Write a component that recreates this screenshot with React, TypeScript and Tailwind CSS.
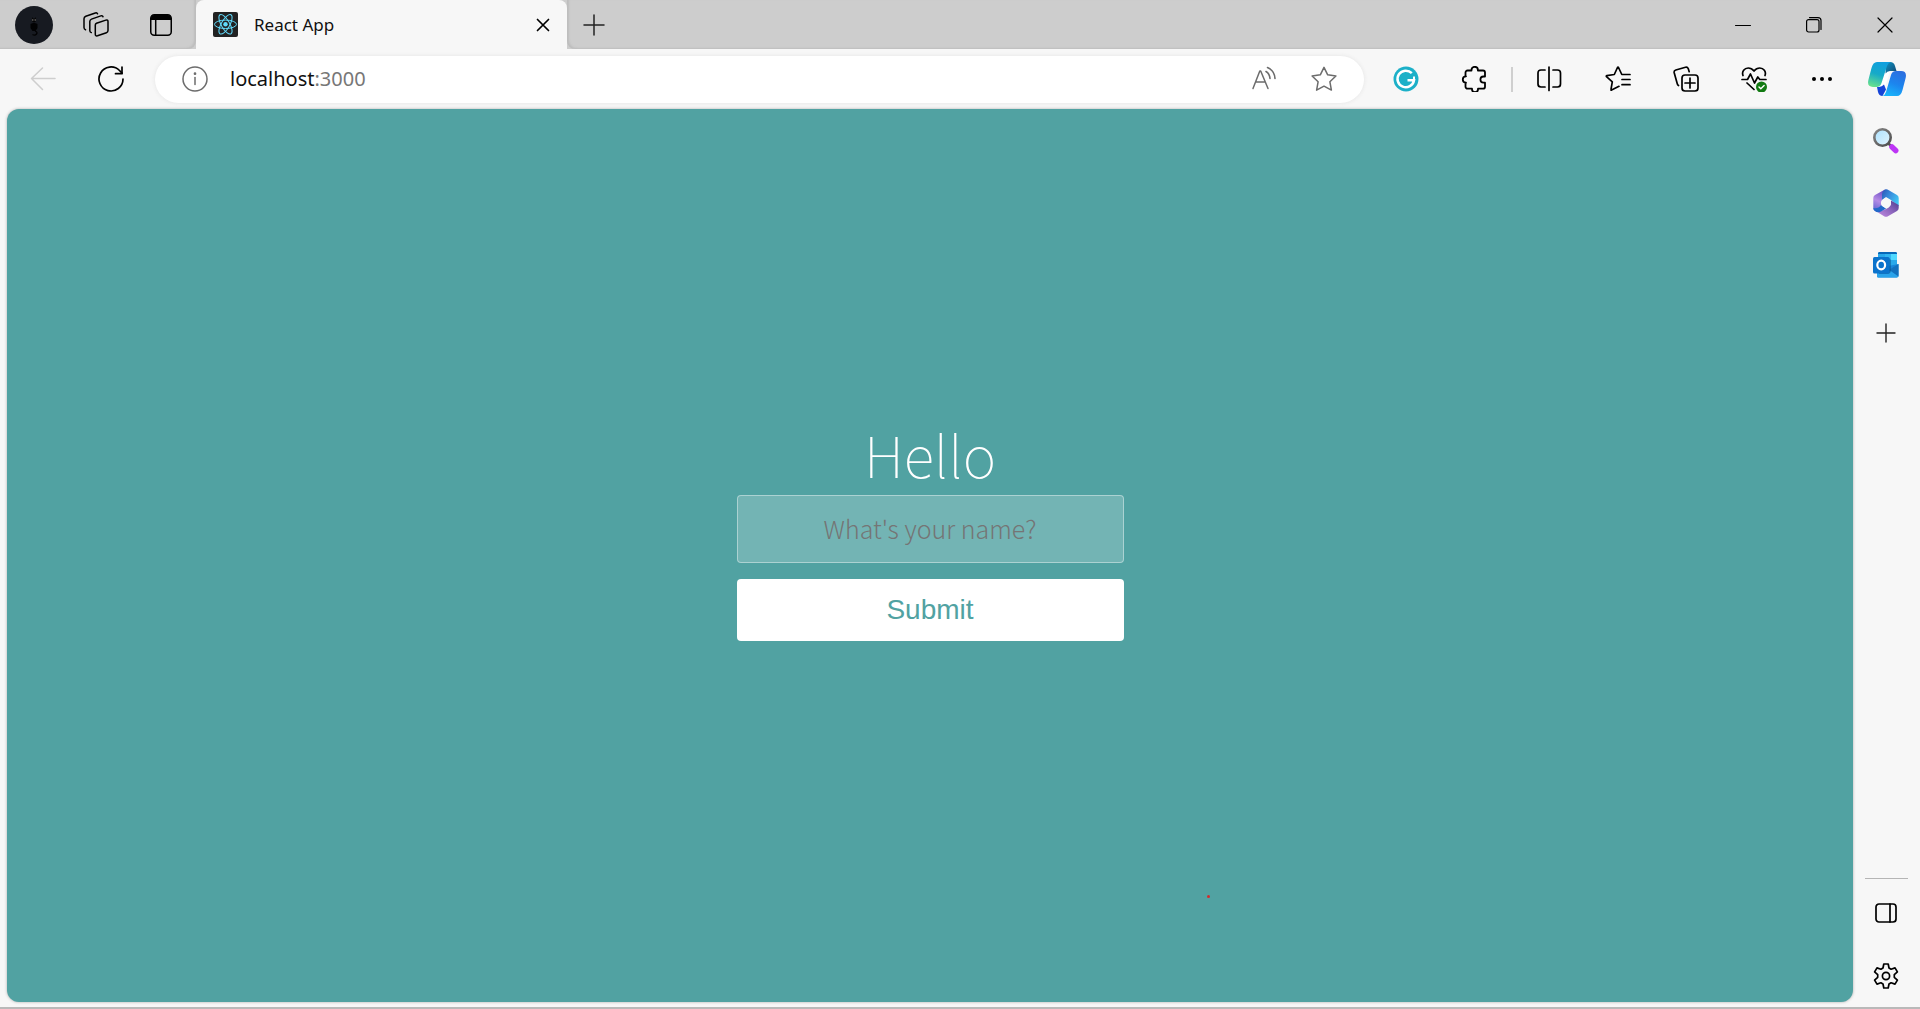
import type { ReactNode } from "react";

type IconButtonProps = { label: string; className: string; children: ReactNode };

function IconButton({ label, className, children }: IconButtonProps) {
  return (
    <button type="button" aria-label={label} className={`flex shrink-0 items-center justify-center ${className}`}>
      {children}
    </button>
  );
}

type LineIconProps = { size?: number; width?: number; children: ReactNode; className?: string };

function LineIcon({ size = 26, width = 1.5, children, className = "" }: LineIconProps) {
  return (
    <svg
      width={size}
      height={size}
      viewBox={`0 0 ${size} ${size}`}
      fill="none"
      stroke="currentColor"
      strokeWidth={width}
      strokeLinecap="round"
      strokeLinejoin="round"
      className={className}
      aria-hidden="true"
    >
      {children}
    </svg>
  );
}

function Avatar() {
  return (
    <svg width="38" height="38" viewBox="0 0 38 38" aria-hidden="true">
      <circle cx="19" cy="19" r="19" fill="#171a21" />
      <path d="M17 11v3.500q0 2 2 2t2-2V11l-1.200 1.500h-1.600z" fill="#060607" />
      <path d="M15.500 18q3.500-2 7 0v4l-2 3h-3l-2-3z" fill="#020203" />
      <path d="M20 25q3 1 1.500 3t-4 .5" fill="none" stroke="#020203" strokeWidth="1.300" />
      <circle cx="17.800" cy="14" r=".7" fill="#8a8580" />
      <circle cx="20.200" cy="14" r=".7" fill="#8a8580" />
    </svg>
  );
}

function WorkspacesIcon() {
  return (
    <LineIcon>
      <path d="M13.500 11.300 L22.800 8.100 q2.200-.6 2.200 1.600 V18.500 q0 1.700-1.600 2.200 L14.500 23.800 q-2.200.6-2.200-1.500 V13 q0-1.200 1.200-1.700z" />
      <path d="M20 4.800q-.4-1.500-2.200-.9L8.500 7.100q-1.700.6-1.700 2.400v9q0 1.600 1.500 2.100" />
      <path d="M14.500 1.800q-.5-1.400-2.200-.8L2.800 4.300Q1 5 1 6.800v8.800q0 1.600 1.500 2.100" />
    </LineIcon>
  );
}

function VerticalTabsIcon() {
  return (
    <svg width="22" height="22" viewBox="0 0 22 22" fill="none" stroke="#000" strokeWidth="1.500" aria-hidden="true">
      <rect x=".75" y=".75" width="20.500" height="20.500" rx="3.500" />
      <path d="M1 6V4q0-3 3-3h14q3 0 3 3v2z" fill="#000" stroke="none" />
      <path d="M5.700 6v15" />
    </svg>
  );
}

function ReactLogo() {
  return (
    <svg width="25" height="25" viewBox="0 0 25 25" aria-hidden="true" className="shrink-0">
      <rect width="25" height="25" rx="2" fill="#222" />
      <g fill="none" stroke="#61dafb" strokeWidth="1">
        <ellipse cx="12.500" cy="12.300" rx="11" ry="4.200" />
        <ellipse cx="12.500" cy="12.300" rx="11" ry="4.200" transform="rotate(60 12.500 12.300)" />
        <ellipse cx="12.500" cy="12.300" rx="11" ry="4.200" transform="rotate(120 12.500 12.300)" />
      </g>
      <circle cx="12.500" cy="12.300" r="2.200" fill="#61dafb" />
    </svg>
  );
}

function GrammarlyIcon() {
  return (
    <svg width="26" height="26" viewBox="0 0 26 26" fill="none" aria-hidden="true">
      <circle cx="13" cy="13" r="12.500" fill="#1cb0c8" />
      <path d="M18.800 7.200A8.300 8.300 0 1 0 21 14.300H14.500" stroke="#fff" strokeWidth="2.500" />
      <path d="M21 10.500v4" stroke="#fff" strokeWidth="2" />
    </svg>
  );
}

function CopilotIcon() {
  return (
    <svg width="38" height="34" viewBox="0 0 38 34" aria-hidden="true">
      <defs>
        <linearGradient id="cpA" x1=".6" y1="0" x2=".3" y2="1">
          <stop offset="0" stopColor="#0f9fdf" />
          <stop offset=".5" stopColor="#16aac8" />
          <stop offset="1" stopColor="#66e08e" />
        </linearGradient>
        <linearGradient id="cpB" x1=".7" y1="0" x2=".3" y2="1">
          <stop offset="0" stopColor="#2c6fe0" />
          <stop offset=".5" stopColor="#1c85ee" />
          <stop offset="1" stopColor="#19b4fb" />
        </linearGradient>
        <linearGradient id="cpC" x1="0" y1="0" x2="1" y2="1">
          <stop offset="0" stopColor="#0c93c5" />
          <stop offset="1" stopColor="#14466f" />
        </linearGradient>
      </defs>
      <path d="M22 9l-5 16h-7q2.500-1 3.500-4l3-9q.8-2.500 3-3z" fill="#fff" />
      <path d="M18 0h4q4 0 5 4l1.500 5H22q-3 0-4.500 2.500z" fill="url(#cpC)" />
      <path d="M9 25h2q3-.3 5-2.500l2 5-3.500 6.500q-3.500 0-4.500-4z" fill="#1544d8" />
      <path d="M9 0h13.500q-2.500 1-3.500 4l-5.500 17q-1.200 4-5 4H5q-6.500 0-4.500-7.500L3.500 6Q5 0 9 0z" fill="url(#cpA)" />
      <path d="M29 34H14.500q2.500-1 3.500-4l5-17q1.200-4 5-4h5q6.500 0 4.500 7.500L34.500 28Q33 34 29 34z" fill="url(#cpB)" />
    </svg>
  );
}

function SearchIcon() {
  return (
    <svg width="26" height="26" viewBox="0 0 26 26" aria-hidden="true">
      <defs>
        <linearGradient id="lens" x1="0" y1="0" x2="1" y2="1">
          <stop offset="0" stopColor="#ace2ff" />
          <stop offset="1" stopColor="#e2f3fc" />
        </linearGradient>
        <linearGradient id="rim" x1="0" y1="0" x2="1" y2="1">
          <stop offset="0" stopColor="#858585" />
          <stop offset="1" stopColor="#4d4d4d" />
        </linearGradient>
      </defs>
      <path d="M15.500 15.500l4 4" stroke="#555" strokeWidth="2.500" />
      <path d="M19 19l3.700 3.500" stroke="#bd35f5" strokeWidth="5.500" strokeLinecap="round" />
      <circle cx="9.500" cy="9.500" r="8.200" fill="url(#lens)" stroke="url(#rim)" strokeWidth="2.600" />
    </svg>
  );
}

function Microsoft365Icon() {
  return (
    <svg width="26" height="28" viewBox="0 0 26 28" aria-hidden="true">
      <defs>
        <linearGradient id="msA" x1=".5" y1="0" x2=".2" y2="1">
          <stop offset="0" stopColor="#6d4fc4" />
          <stop offset=".5" stopColor="#b58be5" />
          <stop offset="1" stopColor="#5a62d0" />
        </linearGradient>
        <linearGradient id="msB" x1="0" y1="0" x2="1" y2=".6">
          <stop offset="0" stopColor="#2b54b5" />
          <stop offset=".5" stopColor="#398ddd" />
          <stop offset="1" stopColor="#40c4f2" />
        </linearGradient>
        <linearGradient id="msC" x1="1" y1="0" x2="0" y2="1">
          <stop offset="0" stopColor="#4c3b8e" />
          <stop offset=".5" stopColor="#8d66bd" />
          <stop offset="1" stopColor="#c18be0" />
        </linearGradient>
      </defs>
      <path d="M12 .5L2 6Q.3 7 .3 9v10q0 2 1.700 3l2 1q5 1 5-5v-7q0-2 2-3l3-2z" fill="url(#msA)" />
      <path d="M12.500.3q1-.4 2 .2L24 6q1.700 1 1.700 3v8L18 11l-5-3-4 3V6q0-4 3.500-5.700z" fill="url(#msB)" />
      <path d="M25.700 16v3q0 2-1.700 3l-9.500 5.400q-1.500.8-3 0L5 23.500l9-4q4-2 4-6v-2z" fill="url(#msC)" />
      <path d="M2 22q-1.700-1-1.700-3 5 1 7.700-3l5 3.500-4 2.500q-4 2.500-7 0z" fill="#2268c9" />
      <path d="M11.500 9.500q1.500-.9 3 0l2 1.200q1.500.9 1.500 2.600v1.400q0 1.700-1.500 2.600l-2 1.200q-1.500.9-3 0l-2-1.200Q8 16.400 8 14.700v-1.400q0-1.700 1.500-2.600z" fill="#f7f7f7" />
    </svg>
  );
}

function OutlookIcon() {
  return (
    <svg width="26" height="26" viewBox="0 0 26 26" aria-hidden="true">
      <rect x="5" y="0" width="19" height="21" rx="1.500" fill="#28a8ea" />
      <path d="M5 1.500Q5 0 6.500 0h16Q24 0 24 1.500V2H5z" fill="#0868b8" />
      <path d="M12 2h6v6h-6z" fill="#32b6f0" />
      <path d="M18 2h6v6h-6z" fill="#50d9ff" />
      <path d="M18 8h6v6l-6 3z" fill="#28a8ea" />
      <path d="M4 15h6l15.500-3v11.500q0 2-2 2h-18Q4 25.500 4 24z" fill="#1785d8" />
      <path d="M25.500 12L15 18.500 25 25q.5-.6.500-1.500z" fill="#1270bd" />
      <path d="M4 21h12l1-2.500 8.500 6q-.6 1-2 1h-18Q4 25.500 4 24z" fill="#2aa3ea" />
      <path d="M18 8v10q0 4-4 4H6V6h10z" fill="#064b83" opacity=".5" />
      <rect x="0" y="5" width="16.500" height="16.500" rx="1.500" fill="#0b73cc" />
      <ellipse cx="8.200" cy="13" rx="3.900" ry="4.300" fill="none" stroke="#fff" strokeWidth="2.200" />
    </svg>
  );
}

function TitleBar() {
  return (
    <header className="flex h-[49px] shrink-0 bg-[#cdcdcd] shadow-[0_1px_2px_#bdbdbd]">
      <div className="flex w-[196px] shrink-0 items-center rounded-br-lg pl-[15px] shadow-[inset_-2px_-1px_2px_#bdbdbd]">
        <IconButton label="Profile" className="w-[38px]"><Avatar /></IconButton>
        <IconButton label="Workspaces" className="ml-[30px] w-[26px]"><WorkspacesIcon /></IconButton>
        <IconButton label="Tab actions menu" className="ml-[41px] w-[22px]"><VerticalTabsIcon /></IconButton>
      </div>
      <div className="relative flex w-[371px] shrink-0 items-center rounded-t-lg bg-[#f7f7f7] pr-4 pl-[17px]">
        <ReactLogo />
        <span className="ml-4 flex-1 text-[17px] leading-6 text-[#111]">React App</span>
        <IconButton label="Close tab" className="w-4">
          <LineIcon size={14} width={1.7}><path d="M1.500 1.500l11 11M12.500 1.500l-11 11" /></LineIcon>
        </IconButton>
      </div>
      <div className="flex flex-1 items-center rounded-bl-lg pl-4 shadow-[inset_2px_-1px_2px_#bdbdbd]">
        <IconButton label="New tab" className="w-[22px]">
          <LineIcon size={22} className="text-[#222]"><path d="M11 1v20M1 11h20" /></LineIcon>
        </IconButton>
        <div className="ml-auto flex">
          <IconButton label="Minimize" className="w-[71px]">
            <LineIcon size={16} width={1}><path d="M.500 8.500h15" /></LineIcon>
          </IconButton>
          <IconButton label="Restore" className="w-[71px]">
            <LineIcon size={16} width={1.2}>
              <rect x=".6" y="2.600" width="12.400" height="12.400" rx="2" />
              <path d="M3.500.6H12q3 0 3 3v8.800" />
            </LineIcon>
          </IconButton>
          <IconButton label="Close window" className="w-[71px]">
            <LineIcon size={16} width={1.2}><path d="M1 1l14 14M15 1L1 15" /></LineIcon>
          </IconButton>
        </div>
      </div>
    </header>
  );
}

function AddressBar() {
  return (
    <div className="relative ml-[10px] mr-2 flex h-[47px] flex-1 items-center rounded-full bg-white pr-[27px] pl-[27px] text-[#6c6c6c] shadow-[0_0_4px_#e4e4e4]">
      <IconButton label="View site information" className="w-[26px]">
        <LineIcon>
          <circle cx="13" cy="13" r="12" />
          <path d="M13 11.500v7" />
          <circle cx="13" cy="7.700" r=".6" fill="currentColor" />
        </LineIcon>
      </IconButton>
      <a href="#" className="ml-[22px] flex-1 text-[20px] leading-7 text-[#777]">
        <span className="text-[#111]">localhost</span>:3000
      </a>
      <IconButton label="Read aloud" className="w-[26px]">
        <LineIcon>
          <path d="M2 22.500L8.800 5h.9L17 22.500M4.800 16h9.500" />
          <path d="M15 5.500q3.500 2 4 7M16.500 1.500q7 3 7.500 11" strokeWidth="1.600" />
        </LineIcon>
      </IconButton>
      <IconButton label="Add this page to favorites" className="ml-[34px] w-[26px]">
        <LineIcon>
          <path d="M13 1.300l3.700 7.500 8.200 1.200-6 5.800 1.500 8.300L13 20.200l-7.400 3.900 1.500-8.300-6-5.800 8.200-1.200z" />
        </LineIcon>
      </IconButton>
    </div>
  );
}

function Toolbar() {
  return (
    <nav aria-label="Browser toolbar" className="flex h-[60px] shrink-0 items-center bg-[#f7f7f7] pl-[9px]">
      <IconButton label="Back" className="h-11 w-[68px] text-[#cecece]">
        <LineIcon><path d="M25 12.500H1.500M12.500 2L1.500 12.500l11 11" /></LineIcon>
      </IconButton>
      <IconButton label="Refresh" className="h-11 w-[68px]">
        <LineIcon width={1.7}>
          <path d="M25 13a12 12 0 1 1-3.500-8.500L24 7.200" />
          <path d="M24 1v6.700h-6.500" />
        </LineIcon>
      </IconButton>
      <AddressBar />
      <IconButton label="Grammarly" className="w-[68px]"><GrammarlyIcon /></IconButton>
      <IconButton label="Extensions" className="w-[68px]">
        <LineIcon width={1.8}>
          <path d="M10.500 4.500V4a3.200 3.200 0 0 1 6.400 0v.5H22a2 2 0 0 1 2 2v4h-1.500a3.100 3.100 0 0 0 0 6.200H24v4a2 2 0 0 1-2 2h-5v.5a3 3 0 0 1-6 0v-.5H6.500a2 2 0 0 1-2-2v-4H5a3.200 3.200 0 0 1 0-6.400h-.5V6.500a2 2 0 0 1 2-2z" />
        </LineIcon>
      </IconButton>
      <div className="flex w-2 shrink-0 justify-center"><div className="h-[25px] w-[2px] bg-[#cfcfcf]" /></div>
      <IconButton label="Split screen" className="w-[68px]">
        <LineIcon width={1.7}>
          <path d="M8 4H4Q1 4 1 7v11q0 3 3 3H8M16 4h4.500q3 0 3 3v11q0 3-3 3H16M12 1v23.500" />
        </LineIcon>
      </IconButton>
      <IconButton label="Favorites" className="w-[68px]">
        <LineIcon width={1.7}>
          <path d="M14 20.300l-7.400 3.800q-.8.300-.6-.7l1.300-7.500-5.800-5.300q-.6-.7.300-1L9.300 8.500l3.200-7q.5-.8 1 0l3.300 7H25M17 13.500h8M17 18.700h8" />
        </LineIcon>
      </IconButton>
      <IconButton label="Collections" className="w-[68px]">
        <LineIcon width={1.7}>
          <rect x="9" y="9" width="16" height="16" rx="3" />
          <path d="M17 12v10M12 17h10M5.500 19.500q-1-.6-1.300-2L1.200 6.800q-.5-2.200 1.600-2.800L12.500 1.200q2-.5 2.800 1.500l.9 3" />
        </LineIcon>
      </IconButton>
      <IconButton label="Browser essentials" className="w-[68px]">
        <LineIcon width={1.7}>
          <path d="M2 9.500C.500 5.500 3.500 2 7.200 2Q10.500 2 13 5q2.500-3 5.800-3c3.700 0 6.700 3.500 5.200 7.500M1 13.500h5.500L9.500 8l4 9 3.300-6 2 2.500H25M6 17l7 6.500" />
          <circle cx="20.500" cy="21" r="5.500" fill="#127a12" stroke="none" />
          <path d="M18 21l1.800 1.800 3.300-3.300" stroke="#fff" strokeWidth="1.400" />
        </LineIcon>
      </IconButton>
      <IconButton label="Settings and more" className="w-[68px]">
        <svg width="22" height="6" viewBox="0 0 22 6" aria-hidden="true">
          <circle cx="3" cy="3" r="2" /><circle cx="11" cy="3" r="2" /><circle cx="19" cy="3" r="2" />
        </svg>
      </IconButton>
      <IconButton label="Copilot" className="w-16 pr-[2px]"><CopilotIcon /></IconButton>
    </nav>
  );
}

function SideBar() {
  return (
    <aside className="flex w-[67px] shrink-0 flex-col items-center pr-px">
      <IconButton label="Search" className="h-16 w-full"><SearchIcon /></IconButton>
      <IconButton label="Microsoft 365" className="h-[60px] w-full"><Microsoft365Icon /></IconButton>
      <IconButton label="Outlook" className="h-16 w-full"><OutlookIcon /></IconButton>
      <IconButton label="Customize" className="mt-1 h-[64px] w-full">
        <LineIcon size={20} width={1.4} className="text-[#222]"><path d="M10 1v18M1 10h18" /></LineIcon>
      </IconButton>
      <div className="mt-auto h-px w-[43px] bg-[#b5b5b5]" />
      <IconButton label="Hide sidebar" className="mt-1 h-[62px] w-full">
        <LineIcon size={22} width={1.7}>
          <rect x="1" y="1" width="20" height="18" rx="3" />
          <path d="M15 1v18" />
        </LineIcon>
      </IconButton>
      <IconButton label="Sidebar settings" className="h-[62px] w-full">
        <LineIcon width={1.7}>
          <path d="M10.800 1h4.400l.8 4 2.100 1.200 3.900-1.300 2.400 4-3.100 2.800v2.600l3.100 2.800-2.400 4-3.900-1.300L16 21l-.8 4h-4.400l-.8-4-2.100-1.200L4 21.100l-2.400-4 3.100-2.800v-2.600L1.600 8.900l2.400-4 3.900 1.300L10 5z" />
          <circle cx="13" cy="13" r="3.600" />
        </LineIcon>
      </IconButton>
    </aside>
  );
}

function GreetingPage() {
  return (
    <main className="relative mb-[5px] ml-[7px] flex flex-1 flex-col items-center justify-center rounded-xl bg-[#51a2a2] shadow-[0_0_3px_#aaa]">
      <form className="flex w-[387px] flex-col items-center pb-14" onSubmit={(e) => e.preventDefault()}>
        <h1 className="mb-1 text-[57px] leading-[76px] font-[100] text-white [font-family:'Noto_Sans_CJK_SC',sans-serif]">Hello</h1>
        <input
          type="text"
          aria-label="What's your name?"
          placeholder="What's your name?"
          className="h-[68px] w-full rounded border border-white/40 bg-white/20 px-4 pb-[2px] text-center text-[25px] font-[300] text-white outline-none [font-family:'Noto_Sans_CJK_SC',sans-serif] placeholder:text-[#757575]"
        />
        <button type="submit" className="mt-4 h-[62px] w-full rounded bg-white text-[28px] leading-8 text-[#51a2a2] [font-family:'Liberation_Sans',Arial,sans-serif]">
          Submit
        </button>
      </form>
      <span className="absolute top-[88%] left-[65%] size-[3px] rounded-full bg-[#d52b2b]" />
    </main>
  );
}

export default function App() {
  return (
    <div className="flex h-screen flex-col border-b-2 border-[#b9b9b9] bg-[#f7f7f7] text-black [font-family:'Noto_Sans','Open_Sans',sans-serif]">
      <TitleBar />
      <Toolbar />
      <div className="flex min-h-0 flex-1">
        <div className="flex flex-1 flex-col"><GreetingPage /></div>
        <SideBar />
      </div>
    </div>
  );
}
